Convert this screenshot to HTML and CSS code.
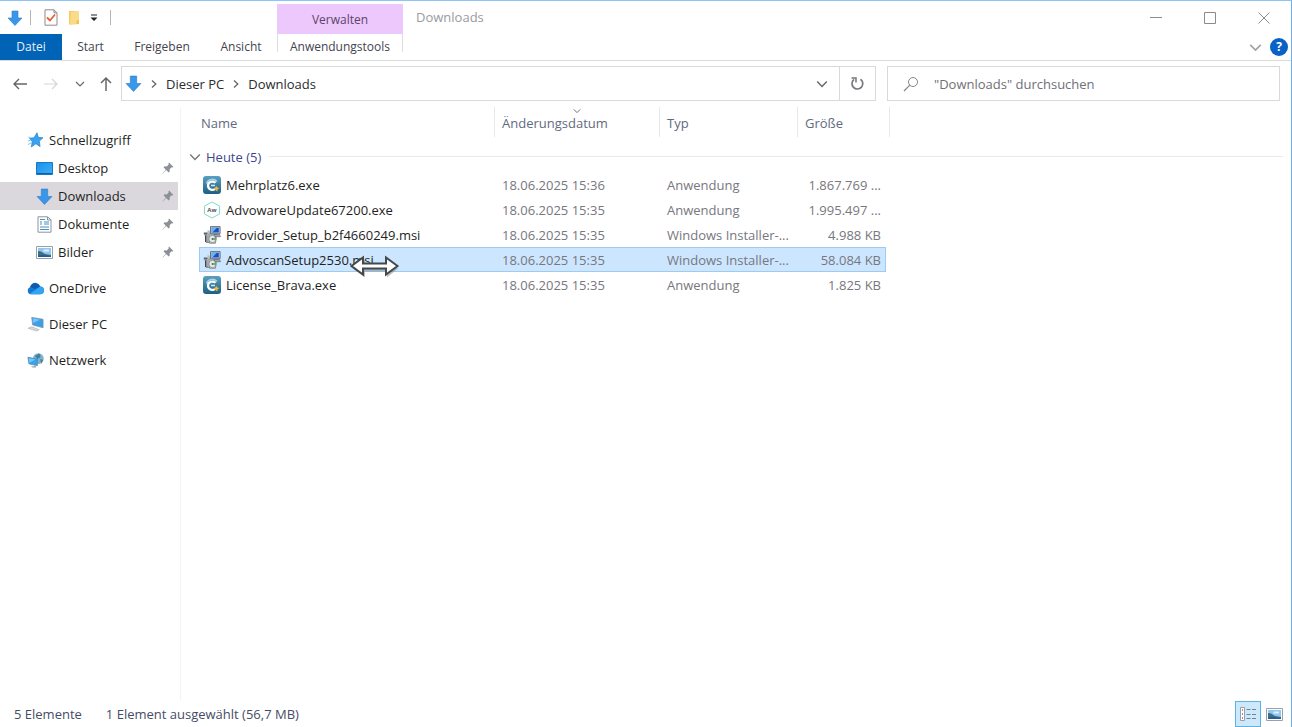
FILE: index.html
```
<!DOCTYPE html>
<html lang="de">
	<head>
		<meta charset="utf-8">
		<meta name="viewport" content="width=device-width, initial-scale=1">
		<title>Downloads</title>
		<link rel="stylesheet" href="styles.css">
	</head>

	<body>
		<!-- shared icons -->
		<svg class="defs" width="0" height="0">
			<linearGradient id="blue" x1="0" y1="0" x2="1" y2="1">
				<stop offset="0" stop-color="#1b8fe8"/>
				<stop offset="1" stop-color="#3fb2f8"/>
			</linearGradient>
			<linearGradient id="teal" x1="0" y1="0" x2="0" y2="1">
				<stop offset="0" stop-color="#5b9fc0"/>
				<stop offset="1" stop-color="#1d5f84"/>
			</linearGradient>
			<symbol id="down" viewBox="0 0 16 16">
				<path d="M5 1h6v7h4l-7 7.500L1 8h4z" fill="#3a96e8" stroke="#2b7fd0" stroke-width=".6"/>
			</symbol>
			<symbol id="pin" viewBox="0 0 12 12">
				<path d="M7 .5 11.500 5l-1.300.6-.6-.3-2 2 .2 2-1.200 1.200-2.400-2.400L.8 11.500l-.3-.3 3.300-3.500L1.500 5.300l1.200-1.100 2 .2 2-2-.3-.7z" fill="#8b9097"/>
			</symbol>
			<symbol id="exe" viewBox="0 0 18 18">
				<rect width="18" height="18" rx="3" fill="url(#teal)"/>
				<path d="M14 5.500C11 2 5 3 3.500 7.500" fill="none" stroke="#a5d3e6" stroke-width="1.500"/>
				<path d="M12.500 6.800C10.500 4.500 5 5.500 5 9.500c0 4 4.500 5.500 7 3.500" fill="none" stroke="#fff" stroke-width="2.200"/>
				<path d="M8 9.500h4" stroke="#d4ecf5" stroke-width="1.500"/>
				<path d="M11 12.500l2.500-2.500 1 1.500 2 .5-2 1.500v2l-1.500-1z" fill="#f0b43c"/>
			</symbol>
			<symbol id="msi" viewBox="0 0 18 18">
				<path d="M.8 6.500h4v2h-4z" fill="#5a6066"/>
				<path d="M1.500 8h3l2 9H3z" fill="#8a9096"/>
				<path d="M2 9.500h1V16H2z" fill="#3f454b"/>
				<path d="M4.500 4l3 1v12l-3-2z" fill="#b9bfc4"/>
				<path d="M6 8h7.500l-1 9.300H6.500z" fill="#d3d8da" stroke="#747b81" stroke-width=".7"/>
				<circle cx="9.500" cy="13" r="3.700" fill="#e6ece8" stroke="#68746e" stroke-width=".7"/>
				<path d="M9.500 13L13 10.500v4.500z" fill="#74a577"/>
				<circle cx="9.500" cy="13" r="1" fill="#59636a"/>
				<path d="M7.500.6h9.600v7.200H7.500z" fill="#bfc8d1" stroke="#4c5868" stroke-width=".8"/>
				<path d="M8.800 1.800h7v4.700h-7z" fill="#1650c8"/>
				<path d="M8.800 1.800h5L9.500 6.500h-.7z" fill="#62b3f2"/>
				<path d="M11 8.500h5.500l1 2.200h-5.300z" fill="#a0a8b0" stroke="#545d66" stroke-width=".6"/>
			</symbol>
			<symbol id="picture" viewBox="0 0 17 13">
				<path d="M.5.5h16v12H.5z" fill="#fff" stroke="#98a0aa"/>
				<path d="M2 2h13v9H2z" fill="#8fc6f2"/>
				<path d="M2 5l3 .5 4 2.500 6 1v2H2z" fill="#3f6f78"/>
				<path d="M2 9.500l6-.5 7 1v1H2z" fill="#2759a0"/>
				<path d="M8 3.500h5v2H7z" fill="#dff0fb"/>
			</symbol>
			<symbol id="chevron" viewBox="0 0 10 10">
				<path d="M1 3l4 4 4-4" fill="none" stroke="currentColor" stroke-width="1.200"/>
			</symbol>
			<symbol id="crumb" viewBox="0 0 10 10">
				<path d="M3 1.500L6.800 5 3 8.500" fill="none" stroke="currentColor" stroke-width="1.300"/>
			</symbol>
		</svg>

		<div class="window">
			<header class="ribbon">
				<div class="quick">
					<svg width="16" height="16"><use href="#down"/></svg>
					<span class="bar"></span>
					<button aria-label="Eigenschaften">
						<svg width="14" height="17" viewBox="0 0 14 17">
							<path d="M1 .8h9l3 3v12.400H1z" fill="#fff" stroke="#8b8b92"/>
							<path d="M10 .8v3h3" fill="none" stroke="#8b8b92"/>
							<path d="M3 8.500l3 3 5-6" fill="none" stroke="#e8602c" stroke-width="1.800"/>
						</svg>
					</button>
					<button aria-label="Neuer Ordner">
						<svg width="12" height="16" viewBox="0 0 12 16">
							<path d="M1 1h7l1 1v10h2v2H2l-1 1z" fill="#f3cd6a"/>
							<path d="M3 2l8-1v13l-9 1z" fill="#fadb86"/>
							<path d="M9 10h2v4H8z" fill="#efc55a"/>
						</svg>
					</button>
					<button aria-label="Symbolleiste anpassen">
						<svg width="8" height="8" viewBox="0 0 8 8"><path d="M1 .5h6v1H1zM.5 3.500h7L4 7z" fill="#222"/></svg>
					</button>
					<span class="bar"></span>
				</div>
				<div class="context">Verwalten</div>
				<h1>Downloads</h1>
				<div class="controls">
					<button aria-label="Minimieren"><svg width="12" height="12"><path d="M0 5.500h12" stroke="#8a8a90"/></svg></button>
					<button aria-label="Maximieren"><svg width="12" height="12"><path d="M.5.500h11v11H.5z" fill="none" stroke="#8a8a90"/></svg></button>
					<button aria-label="Schließen"><svg width="12" height="12"><path d="M.5.500l11 11M11.500.500l-11 11" stroke="#8a8a90"/></svg></button>
				</div>
				<button class="tab file">Datei</button>
				<button class="tab">Start</button>
				<button class="tab">Freigeben</button>
				<button class="tab">Ansicht</button>
				<button class="tab tools">Anwendungstools</button>
				<div class="help">
					<button aria-label="Menüband erweitern"><svg width="13" height="13"><use href="#chevron"/></svg></button>
					<button class="question" aria-label="Hilfe">?</button>
				</div>
			</header>

			<div class="address">
				<div class="history">
					<button aria-label="Zurück"><svg width="16" height="14" viewBox="0 0 16 14"><path d="M15 7H2M7 2L2 7l5 5" fill="none" stroke="#666" stroke-width="1.400"/></svg></button>
					<button aria-label="Vorwärts"><svg width="16" height="14" viewBox="0 0 16 14"><path d="M1 7h13M9 2l5 5-5 5" fill="none" stroke="#d6d6da" stroke-width="1.200"/></svg></button>
					<button aria-label="Zuletzt besucht"><svg width="10" height="10"><use href="#chevron"/></svg></button>
					<button aria-label="Nach oben"><svg width="12" height="16" viewBox="0 0 12 16"><path d="M6 15V2M1 7l5-5 5 5" fill="none" stroke="#666" stroke-width="1.500"/></svg></button>
				</div>
				<nav class="path">
					<svg width="17" height="17"><use href="#down"/></svg>
					<svg class="sep" width="10" height="10"><use href="#crumb"/></svg>
					<a href="#">Dieser PC</a>
					<svg class="sep" width="10" height="10"><use href="#crumb"/></svg>
					<a href="#">Downloads</a>
					<button class="drop" aria-label="Vorherige Orte"><svg width="12" height="12"><use href="#chevron"/></svg></button>
					<button class="reload" aria-label="Aktualisieren">
						<svg width="15" height="15" viewBox="0 0 15 15">
							<path d="M10.500 3.200a5.400 5.400 0 1 1-6.500.2" fill="none" stroke="#77777c" stroke-width="1.700"/>
							<path d="M1.500 2h4.500v4.500" fill="none" stroke="#77777c" stroke-width="1.500"/>
						</svg>
					</button>
				</nav>
				<label class="search">
					<svg width="16" height="16" viewBox="0 0 16 16"><circle cx="10" cy="6" r="4.500" fill="none" stroke="#85858c"/><path d="M6.800 9.200L1 15" stroke="#85858c" stroke-width="1.200"/></svg>
					<input type="text" placeholder="&quot;Downloads&quot; durchsuchen" aria-label="Suchen">
				</label>
			</div>

			<main>
				<nav class="side">
					<a class="root" href="#">
						<svg width="16" height="16" viewBox="0 0 16 16"><path d="M9.500.8l1.300 4.500 4.700.5-3.700 3.300.8 5.400-4.300-2.700L3.800 15l1-5.300L2 6.300l4.500-.6z" fill="#3ba1ee" stroke="#2284cf" stroke-width=".7"/><path d="M.5 12.500l4-2M.5 9l3-1M1 5l2 .5" stroke="#7cc3f5"/></svg>
						Schnellzugriff
					</a>
					<a href="#">
						<svg width="17" height="13" viewBox="0 0 17 13"><path d="M.5.500h16v12H.5z" fill="url(#blue)" stroke="#1978c8"/><path d="M1 11.500h15" stroke="#0d5fa8"/></svg>
						Desktop
						<svg class="pin" width="12" height="12"><use href="#pin"/></svg>
					</a>
					<a class="current" href="#">
						<svg width="17" height="17"><use href="#down"/></svg>
						Downloads
						<svg class="pin" width="12" height="12"><use href="#pin"/></svg>
					</a>
					<a href="#">
						<svg width="17" height="17" viewBox="0 0 17 17"><path d="M2 .8h9.500l3.500 3v12.400H2z" fill="#fff" stroke="#8c939b"/><path d="M4 3.500h5M4 6h2M4 8h2M4 11h9M4 13.500h9M8 6h5M8 8h5" stroke="#4790c4"/><path d="M11.500 1v3H15" fill="none" stroke="#8c939b"/></svg>
						Dokumente
						<svg class="pin" width="12" height="12"><use href="#pin"/></svg>
					</a>
					<a href="#">
						<svg width="17" height="13"><use href="#picture"/></svg>
						Bilder
						<svg class="pin" width="12" height="12"><use href="#pin"/></svg>
					</a>
					<a class="root apart" href="#">
						<svg width="18" height="13" viewBox="0 0 18 13"><path d="M4 12.500A3.800 3.800 0 0 1 4 5 5.500 5.500 0 0 1 14 4.500a4 4 0 0 1 0 8z" fill="#1377d4"/><path d="M4.500 2.500A5.500 5.500 0 0 1 14 4.500L9 7 3 5z" fill="#0b5bb0"/><path d="M3 12l7-5 4-2.500a4 4 0 0 1 3 6.500q-1 1.500-3 1.500H4z" fill="#32a5f2"/></svg>
						OneDrive
					</a>
					<a class="root apart" href="#">
						<svg width="18" height="16" viewBox="0 0 18 16"><path d="M5 1l12 2v9L6 9z" fill="#3aa0ea" stroke="#7893a8" stroke-width=".8"/><path d="M6 2l8 1.500L6.500 7z" fill="#74c4fa"/><path d="M1 12.500l4-1.500 8 3-3 1.500z" fill="#d5d9de" stroke="#a2a8ae" stroke-width=".6"/></svg>
						Dieser PC
					</a>
					<a class="root apart" href="#">
						<svg width="18" height="17" viewBox="0 0 18 17"><circle cx="12" cy="6.500" r="5.700" fill="#7fb2cc"/><path d="M8 3q3 1 4-2 3 1 2 4l-3 2zM14 7l3 1-2 4z" fill="#417f9e"/><path d="M1 5l10 2v7L2 12z" fill="#37a3ee" stroke="#5a87a8" stroke-width=".8"/><path d="M2 6l7 1.500L2.500 11z" fill="#73c8fb"/><path d="M4 15l5-1 1 2H6z" fill="#9aa4ad"/></svg>
						Netzwerk
					</a>
				</nav>

				<table class="files">
					<colgroup>
						<col class="c-name"><col class="c-date"><col class="c-type"><col class="c-size"><col class="c-edge"><col>
					</colgroup>
					<thead>
						<tr>
							<th>Name</th>
							<th class="sorted">Änderungsdatum<svg width="10" height="8"><use href="#chevron"/></svg></th>
							<th>Typ</th>
							<th>Größe</th>
							<th></th>
							<th></th>
						</tr>
					</thead>
					<tbody>
						<tr class="group">
							<td colspan="6"><div><svg width="12" height="12"><use href="#chevron"/></svg>Heute (5)</div></td>
						</tr>
						<tr>
							<td><div class="name"><svg width="18" height="18"><use href="#exe"/></svg>Mehrplatz6.exe</div></td>
							<td>18.06.2025 15:36</td><td>Anwendung</td><td class="size">1.867.769 ...</td>
						</tr>
						<tr>
							<td><div class="name">
								<svg width="18" height="18" viewBox="0 0 18 18"><path d="M9 1l7.500 4v8L9 17l-7.500-4V5z" fill="#fff" stroke="#7ddccc"/><text class="mark" x="9" y="11" text-anchor="middle">Aw</text></svg>
								AdvowareUpdate67200.exe</div></td>
							<td>18.06.2025 15:35</td><td>Anwendung</td><td class="size">1.995.497 ...</td>
						</tr>
						<tr>
							<td><div class="name"><svg width="18" height="18"><use href="#msi"/></svg>Provider_Setup_b2f4660249.msi</div></td>
							<td>18.06.2025 15:35</td><td>Windows Installer-...</td><td class="size">4.988 KB</td>
						</tr>
						<tr class="selected">
							<td><div class="name"><svg width="18" height="18"><use href="#msi"/></svg>AdvoscanSetup2530.msi
								<svg class="cursor" width="50" height="26" viewBox="0 0 50 26">
									<path d="M3 14.500L15 5.500v6h22v-6l11 9-11 9v-6H15v6z" fill="#7d8288" opacity=".5"/>
									<path d="M1.500 12L13 3.500V9.500h23V3.500L47.500 12 36 20.500v-6H13v6z" fill="#fff" stroke="#45484d" stroke-width="2"/>
								</svg></div></td>
							<td>18.06.2025 15:35</td><td>Windows Installer-...</td><td class="size">58.084 KB</td>
						</tr>
						<tr>
							<td><div class="name"><svg width="18" height="18"><use href="#exe"/></svg>License_Brava.exe</div></td>
							<td>18.06.2025 15:35</td><td>Anwendung</td><td class="size">1.825 KB</td>
						</tr>
					</tbody>
				</table>
			</main>

			<footer>
				<span>5 Elemente</span>
				<span>1 Element ausgewählt (56,7 MB)</span>
				<div class="views">
					<button class="on" aria-label="Details">
						<svg width="18" height="16" viewBox="0 0 18 16"><path d="M1.500 1.500h4v13h-4z" fill="#fff" stroke="#9a9fa6"/><path d="M3 4h1M3 12h1" stroke="#c5513f" stroke-width="1.500"/><path d="M3 8h1" stroke="#4479b5" stroke-width="1.500"/><path d="M7.500 3.500h4M13 3.500h4M7.500 8.500h4M13 8.500h4M7.500 12.500h4M13 12.500h4" stroke="#76828f"/></svg>
					</button>
					<button aria-label="Große Symbole"><svg width="17" height="13"><use href="#picture"/></svg></button>
				</div>
			</footer>
		</div>
	</body>
</html>
```
FILE: styles.css
```
html {
	box-sizing: border-box;
}
*, *:before, *:after {
	box-sizing: inherit;
}
body {
	margin: 0;
	background-color: white;
	color: #1f1f24;
	font-family: "Open Sans", "Noto Sans", sans-serif;
	font-size: 13px;
	line-height: 20px;
}
button {
	display: flex;
	align-items: center;
	justify-content: center;
	margin: 0;
	padding: 0;
	border: 0;
	background: none;
	color: inherit;
	font: inherit;
}
a {
	color: inherit;
	text-decoration: none;
}
svg {
	flex: none;
}
.defs {
	position: absolute;
}
.window {
	display: flex;
	flex-direction: column;
	min-height: 100vh;
	border-top: 1px solid #8cc4f5;
	border-right: 1px solid #6aaef0;
}

/* title bar and tabs */
.ribbon {
	display: grid;
	grid-template-columns: 62px 57px 86px 72px 126px 1fr auto;
	grid-template-rows: 33px 26px;
	border-bottom: 1px solid #dadbdc;
	font-size: 12px;
	color: #444450;
}
.quick {
	grid-column: 1 / 5;
	display: flex;
	align-items: center;
	gap: 10px;
	padding-left: 7px;
}
.bar {
	width: 1px;
	height: 15px;
	background-color: #b4b4ba;
}
.quick .bar {
	margin-right: 3px;
	margin-left: -3px;
}
.quick .bar:last-child {
	margin-left: 2px;
}
.context {
	display: flex;
	align-items: center;
	justify-content: center;
	margin-top: 3px;
	padding-top: 2px;
	background-color: #edc8fc;
	color: #5b4468;
}
.ribbon h1 {
	margin: 0;
	padding-left: 13px;
	font-size: 13px;
	font-weight: normal;
	line-height: 33px;
	color: #9a9a9f;
}
.controls {
	display: flex;
	gap: 42px;
	padding-right: 21px;
}
.tab.file {
	background-color: #0063b5;
	color: #e6f2fc;
}
.tab.tools {
	height: 18px;
	padding-top: 8px;
	border: solid #dcdce0;
	border-width: 0 1px;
}
.help {
	grid-column: 6 / 8;
	display: flex;
	align-items: center;
	justify-content: flex-end;
	gap: 8px;
	padding-right: 3px;
	color: #a0a0a6;
}
.question {
	width: 18px;
	height: 18px;
	border-radius: 50%;
	background-color: #0a63c4;
	color: white;
	font-weight: bold;
}

/* address row */
.address {
	display: flex;
	height: 46px;
	padding: 5px 11px 6px 12px;
	color: #66666b;
}
.history {
	display: flex;
	align-items: center;
	justify-content: space-between;
	width: 100px;
	margin-right: 9px;
}
.path {
	flex: 750;
	display: flex;
	align-items: center;
	gap: 7px;
	padding-left: 3px;
	border: 1px solid #d9d9dc;
	color: #2b2b30;
}
.sep,
.drop {
	color: #66666b;
}
.drop {
	margin-right: 4px;
	margin-left: auto;
}
.reload {
	align-self: stretch;
	width: 36px;
	border-left: 1px solid #d9d9dc;
}
.search {
	flex: 376;
	display: flex;
	align-items: center;
	gap: 15px;
	margin-left: 11px;
	padding-left: 15px;
	border: 1px solid #d9d9dc;
}
.search input {
	flex: 1;
	min-width: 0;
	padding: 0;
	border: 0;
	outline: 0;
	font: inherit;
}
.search input::placeholder {
	color: #707076;
}

/* folders and files */
main {
	flex: 1;
	display: flex;
}
.side {
	width: 181px;
	padding-top: 19px;
	border-right: 1px solid #f5f3f5;
}
.side a {
	display: flex;
	align-items: center;
	gap: 5px;
	height: 28px;
	margin-right: 2px;
	padding: 0 4px 0 36px;
}
.side .root {
	padding-left: 27px;
}
.side .root svg {
	width: 17px;
}
.side .apart {
	margin-top: 8px;
}
.side .current {
	background-color: #dad8dc;
}
.side .pin {
	margin-left: auto;
}
.files {
	flex: 1;
	align-self: flex-start;
	table-layout: fixed;
	width: 100%;
	margin: 0 8px 0 18px;
	border-collapse: separate;
	border-spacing: 0;
}
.c-name { width: 296px; }
.c-date { width: 165px; }
.c-type { width: 138px; }
.c-size { width: 88px; }
.c-edge { width: 4px; }
.files th {
	position: relative;
	height: 30px;
	padding: 2px 0 0 7px;
	border-right: 1px solid #e8e8ec;
	font-weight: normal;
	text-align: left;
	color: #626a80;
}
.files th:first-child {
	padding-left: 2px;
}
.files th:nth-child(4),
.files th:last-child {
	border-right: 0;
}
.sorted svg {
	position: absolute;
	top: 0;
	left: 50%;
	margin-left: -5px;
}
.files td {
	height: 25px;
	padding: 0 0 0 7px;
	border: solid transparent;
	border-width: 1px 0;
	color: #77777e;
	white-space: nowrap;
}
.files td:first-child {
	padding-left: 3px;
	border-left-width: 1px;
}
.files td.size {
	padding-right: 4px;
	border-right-width: 1px;
	text-align: right;
}
.group div,
.name {
	display: flex;
	align-items: center;
	gap: 5px;
}
.files .group td {
	height: 35px;
	padding: 4px 0 0;
	color: #3f4790;
}
.group div {
	margin-left: -11px;
}
.group svg {
	color: #77777e;
}
.group div:after {
	content: "";
	flex: 1;
	height: 1px;
	margin-left: 3px;
	background-color: #e9e9ec;
}
.name {
	position: relative;
	color: #1f1f24;
}
.mark {
	font-size: 6px;
	font-weight: bold;
	fill: #555;
}
.files .selected td {
	background-color: #cce6ff;
	border-color: #9fcbf0;
}
.cursor {
	position: absolute;
	top: 4px;
	left: 147px;
}

/* status bar */
footer {
	display: flex;
	align-items: center;
	gap: 24px;
	height: 26px;
	padding-left: 14px;
	color: #454d66;
}
.views {
	display: flex;
	align-self: stretch;
	margin-left: auto;
	padding-right: 4px;
}
.views button {
	width: 26px;
}
.views .on {
	border: 1px solid #5fb2e6;
	background-color: #cce8fb;
}
```
